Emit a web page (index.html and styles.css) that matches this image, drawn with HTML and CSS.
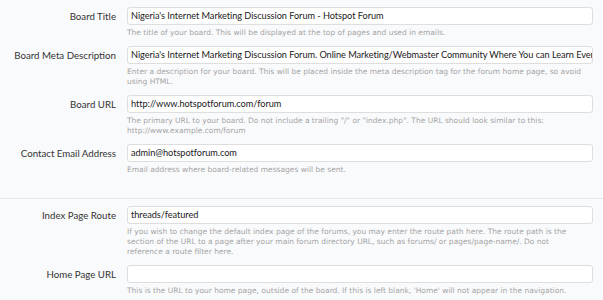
FILE: index.html
```html
<!DOCTYPE html>
<html>
<head>
<meta charset="utf-8">
<link rel="stylesheet" href="styles.css">
</head>
<body>
<div class="section first">
  <div class="row">
    <div class="label">Board Title</div>
    <div class="field">
      <div class="input">Nigeria's Internet Marketing Discussion Forum - Hotspot Forum</div>
      <div class="explain">The title of your board. This will be displayed at the top of pages and used in emails.</div>
    </div>
  </div>
  <div class="row">
    <div class="label">Board Meta Description</div>
    <div class="field">
      <div class="input">Nigeria's Internet Marketing Discussion Forum. Online Marketing/Webmaster Community Where You can Learn Ever</div>
      <div class="explain">Enter a description for your board. This will be placed inside the meta description tag for the forum home page, so avoid<br>using HTML.</div>
    </div>
  </div>
  <div class="row">
    <div class="label">Board URL</div>
    <div class="field">
      <div class="input">http://www.hotspotforum.com/forum</div>
      <div class="explain">The primary URL to your board. Do not include a trailing "/" or "index.php". The URL should look similar to this:<br>http://www.example.com/forum</div>
    </div>
  </div>
  <div class="row">
    <div class="label">Contact Email Address</div>
    <div class="field">
      <div class="input">admin@hotspotforum.com</div>
      <div class="explain">Email address where board-related messages will be sent.</div>
    </div>
  </div>
</div>
<div class="section second">
  <div class="row">
    <div class="label">Index Page Route</div>
    <div class="field">
      <div class="input">threads/featured</div>
      <div class="explain">If you wish to change the default index page of the forums, you may enter the route path here. The route path is the<br>section of the URL to a page after your main forum directory URL, such as forums/ or pages/page-name/. Do not<br>reference a route filter here.</div>
    </div>
  </div>
  <div class="row">
    <div class="label">Home Page URL</div>
    <div class="field">
      <div class="input"></div>
      <div class="explain">This is the URL to your home page, outside of the board. If this is left blank, 'Home' will not appear in the navigation.</div>
    </div>
  </div>
</div>
</body>
</html>
```

FILE: styles.css
```css
html, body {
  margin: 0;
  padding: 0;
  background: #f9fafc;
}
body {
  width: 603px;
  height: 300px;
  overflow: hidden;
  font-family: Lato, "Open Sans", sans-serif;
}
.section.first {
  padding: 7px 0 15px;
  border-bottom: 1px solid #e2e6ee;
}
.section.second {
  padding-top: 7px;
}
.row {
  display: grid;
  grid-template-columns: 116px 466px;
  column-gap: 11px;
  margin-bottom: 8px;
}
.label {
  text-align: right;
  font-size: 9.7px;
  line-height: 18px;
  color: #333;
  white-space: nowrap;
}
.input {
  box-sizing: border-box;
  height: 18px;
  background: #fff;
  border: 1px solid #dedede;
  border-radius: 3px;
  padding: 0 2px 0 3px;
  font-size: 9.2px;
  letter-spacing: -0.05px;
  line-height: 16px;
  color: #1a1a1a;
  white-space: nowrap;
  overflow: hidden;
}
.explain {
  margin-top: 3px;
  font-family: "DejaVu Sans", sans-serif;
  font-size: 7.5px;
  line-height: 10px;
  color: #a5a5a5;
  white-space: nowrap;
}
```
